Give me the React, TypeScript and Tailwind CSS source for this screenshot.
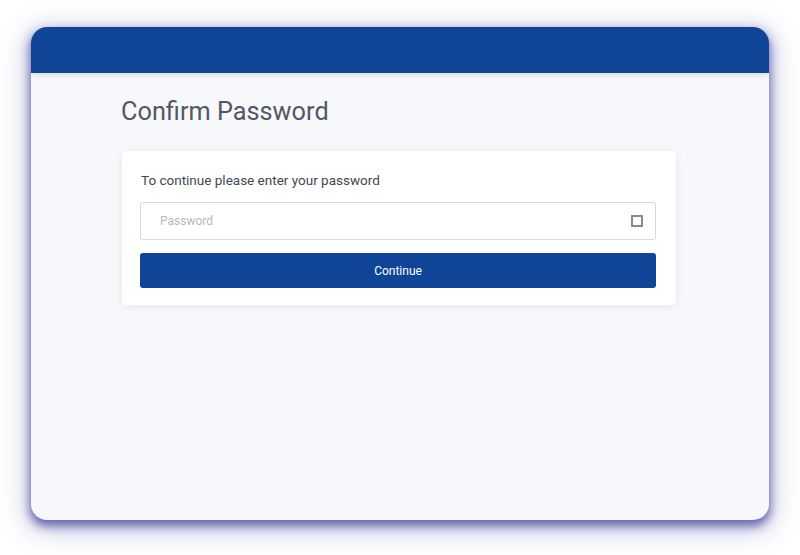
export default function App() {
  return (
    <div className="w-[800px] h-[555px] bg-white pt-[27px] pl-[31px]" style={{ fontFamily: "Roboto, 'Noto Sans', sans-serif" }}>
      <div className="w-[738px] h-[493px] rounded-[16px] bg-[#f7f8fc] overflow-hidden flex flex-col shadow-[0_5px_10px_1px_rgba(85,85,165,0.85),0_6px_24px_6px_rgba(110,110,190,0.35)]">
        {/* header bar */}
        <header className="h-[46px] shrink-0 bg-[#0f4496] shadow-[0_2px_6px_rgba(0,0,0,0.12)]" />

        <main className="pl-[90px] pt-[23px]">
          <h1 className="text-[25.3px] leading-[32px] font-normal text-[#545763]">Confirm Password</h1>

          <div className="mt-[23px] ml-[1px] w-[554px] bg-white rounded-[4px] shadow-[0_1px_8px_rgba(0,0,0,0.08)] pl-[18px] pr-[20px] pt-[19px] pb-[17px]">
            <p className="text-[13.5px] leading-[20px] text-[#434752] pl-[1px]">To continue please enter your password</p>

            <div className="mt-[12px] h-[38px] border border-[#d8d9de] rounded-[2px] flex items-center justify-between pl-[19px] pr-[12px]">
              <span className="text-[12px] text-[#b7b8bc]">Password</span>
              <span className="w-[12px] h-[12px] border-2 border-[#8a8a8a]" />
            </div>

            <button className="mt-[13px] w-full h-[35px] rounded-[3px] bg-[#0f4496] text-white text-[12px] flex items-center justify-center">
              Continue
            </button>
          </div>
        </main>
      </div>
    </div>
  );
}
